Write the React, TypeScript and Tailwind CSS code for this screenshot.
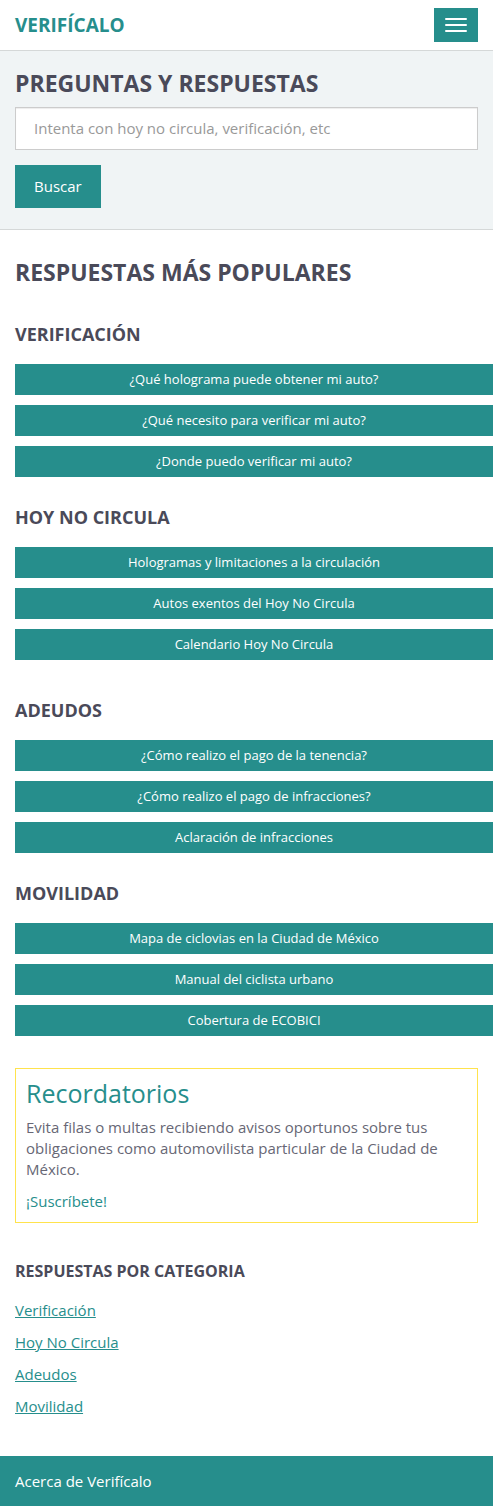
const groups = [
  {
    title: "VERIFICACIÓN",
    gap: "mb-7",
    items: ["¿Qué holograma puede obtener mi auto?", "¿Qué necesito para verificar mi auto?", "¿Donde puedo verificar mi auto?"],
  },
  {
    title: "HOY NO CIRCULA",
    gap: "mb-[38px]",
    items: ["Hologramas y limitaciones a la circulación", "Autos exentos del Hoy No Circula", "Calendario Hoy No Circula"],
  },
  {
    title: "ADEUDOS",
    gap: "mb-7",
    items: ["¿Cómo realizo el pago de la tenencia?", "¿Cómo realizo el pago de infracciones?", "Aclaración de infracciones"],
  },
  {
    title: "MOVILIDAD",
    gap: "mb-8",
    items: ["Mapa de ciclovias en la Ciudad de México", "Manual del ciclista urbano", "Cobertura de ECOBICI"],
  },
];

const categories = ["Verificación", "Hoy No Circula", "Adeudos", "Movilidad"];

export default function App() {
  return (
    <div className="min-h-screen bg-white font-['Open_Sans','Noto_Sans',sans-serif] text-[15px] leading-[21px] text-[#676775]">
      <header className="flex h-[51px] items-center justify-between border-b border-[#d5d8d8] px-[15px]">
        <a href="#" className="text-[19px] font-bold text-[#268e8c]">VERIFÍCALO</a>
        <button type="button" aria-label="Menú" className="flex h-[34px] w-11 flex-col items-center justify-center gap-1 bg-[#268e8c]">
          <span className="h-0.5 w-[22px] rounded-[1px] bg-white" />
          <span className="h-0.5 w-[22px] rounded-[1px] bg-white" />
          <span className="h-0.5 w-[22px] rounded-[1px] bg-white" />
        </button>
      </header>

      <form className="border-b border-[#d5d8d8] bg-[#f0f4f5] px-[15px] pt-[19px] pb-[21px]" onSubmit={(e) => e.preventDefault()}>
        <h1 className="mb-2.5 text-[23px] leading-[27px] font-bold text-[#4a4a59]">
          <label htmlFor="search">PREGUNTAS Y RESPUESTAS</label>
        </h1>
        <input
          id="search"
          type="text"
          placeholder="Intenta con hoy no circula, verificación, etc"
          className="mb-[15px] block h-[43px] w-full border border-[#cccccc] bg-white px-[18px] pb-0.5 text-[15px] shadow-[inset_0_1px_1px_rgba(0,0,0,0.075)] placeholder:text-[#999999]"
        />
        <button type="submit" className="block h-[43px] bg-[#268e8c] px-[19px] text-white">Buscar</button>
      </form>

      <main>
        <h2 className="mt-[29px] mb-9 px-[15px] text-[23px] leading-[27px] font-bold text-[#4a4a59]">RESPUESTAS MÁS POPULARES</h2>
        {groups.map((group) => (
          <section key={group.title} className={`pl-[15px] ${group.gap}`}>
            <h3 className="mb-[17px] text-[18px] leading-[25px] font-bold text-[#4a4a59]">{group.title}</h3>
            <ul className="flex flex-col gap-2.5">
              {group.items.map((item) => (
                <li key={item}>
                  <a href="#" className="block bg-[#268e8c] text-center text-[13px] leading-[31px] text-white">{item}</a>
                </li>
              ))}
            </ul>
          </section>
        ))}

        <aside className="mx-[15px] border border-[#ffe34d] p-2.5">
          <h2 className="mb-2.5 text-[25px] leading-7 text-[#268e8c]">Recordatorios</h2>
          <p className="mb-[11px]">
            Evita filas o multas recibiendo avisos oportunos sobre tus obligaciones como automovilista particular de la Ciudad de México.
          </p>
          <a href="#" className="block text-[#268e8c]">¡Suscríbete!</a>
        </aside>

        <nav aria-labelledby="categories" className="px-[15px] pt-[37px] pb-[39px]">
          <h2 id="categories" className="mb-[18px] text-[16px] leading-[22px] font-bold text-[#4a4a59]">RESPUESTAS POR CATEGORIA</h2>
          <ul className="flex flex-col gap-[11px]">
            {categories.map((category) => (
              <li key={category}>
                <a href="#" className="text-[#268e8c] underline">{category}</a>
              </li>
            ))}
          </ul>
        </nav>
      </main>

      <footer className="bg-[#268e8c] px-[15px] pt-[15px] pb-3.5">
        <a href="#" className="block text-white">Acerca de Verifícalo</a>
      </footer>
    </div>
  );
}
